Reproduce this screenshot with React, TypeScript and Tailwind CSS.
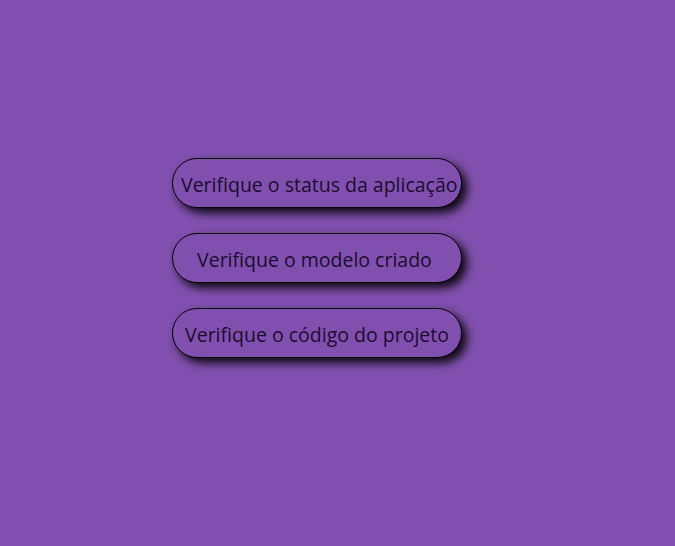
import React from "react";

const links = [
  "Verifique o status da aplicação",
  "Verifique o modelo criado\u00a0",
  "Verifique o código do projeto",
];

export default function App() {
  return (
    <div className="min-h-screen w-full bg-[#8150ae] pt-[158px] pl-[172px] font-['Segoe_UI','Open_Sans',sans-serif]">
      <div className="flex flex-col gap-[25px]">
        {links.map((label) => (
          <button
            key={label}
            className="block w-[290px] h-[50px] rounded-full border border-black bg-[#8150ae] px-2 pt-[3px] text-center text-[19.5px] text-[#1a0c30] shadow-[5px_5px_10px_rgba(0,0,0,0.9)] whitespace-nowrap"
          >
            {label}
          </button>
        ))}
      </div>
    </div>
  );
}
